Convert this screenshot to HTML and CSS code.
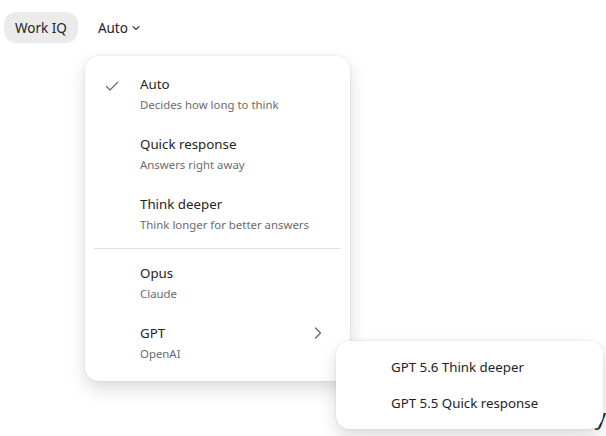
FILE: index.html
```html
<!DOCTYPE html>
<html lang="en">
<head>
    <meta charset="UTF-8">
    <meta name="viewport" content="width=device-width, initial-scale=1.0">
    <title>Chat</title>
    <link rel="stylesheet" href="styles.css">
</head>
<body>
    <div class="toolbar">
        <button class="pill">Work IQ</button>
        <button class="mode">Auto
            <svg width="10" height="10" viewBox="0 0 10 10"><path d="M2 3.5 L5 6.5 L8 3.5" fill="none" stroke="#424242" stroke-width="1.1" stroke-linecap="round" stroke-linejoin="round"/></svg>
        </button>
    </div>

    <main class="content">
        <p class="greeting">today</p>
    </main>

    <!-- model picker -->
    <div class="menu">
        <div class="item">
            <span class="check">
                <svg width="14" height="14" viewBox="0 0 14 14"><path d="M1.5 7.5 L5 11 L12.5 3.5" fill="none" stroke="#6b6b6b" stroke-width="1.2" stroke-linecap="round" stroke-linejoin="round"/></svg>
            </span>
            <div class="text">
                <div class="label">Auto</div>
                <div class="sub">Decides how long to think</div>
            </div>
        </div>
        <div class="item">
            <span class="check"></span>
            <div class="text">
                <div class="label">Quick response</div>
                <div class="sub">Answers right away</div>
            </div>
        </div>
        <div class="item">
            <span class="check"></span>
            <div class="text">
                <div class="label">Think deeper</div>
                <div class="sub">Think longer for better answers</div>
            </div>
        </div>
        <div class="divider"></div>
        <div class="item">
            <span class="check"></span>
            <div class="text">
                <div class="label">Opus</div>
                <div class="sub">Claude</div>
            </div>
        </div>
        <div class="item">
            <span class="check"></span>
            <div class="text">
                <div class="label">GPT</div>
                <div class="sub">OpenAI</div>
            </div>
            <svg class="chev" width="12" height="14" viewBox="0 0 12 14"><path d="M3.5 2 L8.5 7 L3.5 12" fill="none" stroke="#616161" stroke-width="1.2" stroke-linecap="round" stroke-linejoin="round"/></svg>
        </div>
    </div>

    <div class="submenu">
        <div class="subitem">GPT 5.6 Think deeper</div>
        <div class="subitem">GPT 5.5 Quick response</div>
    </div>
</body>
</html>
```

FILE: styles.css
```css
body {
    margin: 0;
    font-family: "Noto Sans", "Open Sans", sans-serif;
    color: #242424;
    background: #fff;
    width: 606px;
    height: 436px;
    overflow: hidden;
    position: relative;
}
button {
    font-family: inherit;
    color: inherit;
    border: none;
    cursor: pointer;
}
.toolbar {
    display: flex;
    align-items: center;
    gap: 13px;
    padding: 12px 4px;
}
.pill {
    height: 31px;
    padding: 0 11px;
    border-radius: 12px;
    background: #ebebeb;
    font-size: 13.5px;
}
.mode {
    display: flex;
    align-items: center;
    gap: 3px;
    background: none;
    font-size: 13.5px;
    padding: 0 7px;
}
.content {
    display: flex;
    justify-content: flex-end;
    padding-top: 346px;
}
.greeting {
    margin: 0;
    font-size: 22px;
    white-space: nowrap;
}
.menu {
    position: absolute;
    left: 85px;
    top: 56px;
    width: 265px;
    padding: 8px 0;
    box-sizing: border-box;
    background: #fff;
    border-radius: 14px;
    box-shadow: 0 8px 18px rgba(0, 0, 0, 0.14), 0 0 3px rgba(0, 0, 0, 0.1);
}
.item {
    display: flex;
    align-items: center;
    height: 60px;
    padding: 0 26px 0 20px;
}
.check {
    width: 35px;
    display: flex;
    align-items: center;
    align-self: flex-start;
    padding-top: 15px;
}
.text {
    flex: 1;
}
.label {
    font-size: 13.3px;
    line-height: 20px;
}
.sub {
    font-size: 11.4px;
    line-height: 20px;
    margin-top: 1px;
    color: #6b6b6b;
}
.chev {
    align-self: flex-start;
    margin-top: 13px;
}
.divider {
    height: 1px;
    background: #e0e0e0;
    margin: 4px 9px;
}
.submenu {
    position: absolute;
    left: 336px;
    top: 341px;
    width: 267px;
    padding: 8px 0;
    box-sizing: border-box;
    background: #fff;
    border-radius: 14px;
    box-shadow: 0 8px 18px rgba(0, 0, 0, 0.14), 0 0 3px rgba(0, 0, 0, 0.1);
}
.subitem {
    height: 36px;
    line-height: 36px;
    padding-left: 55px;
    font-size: 13.3px;
}
```
